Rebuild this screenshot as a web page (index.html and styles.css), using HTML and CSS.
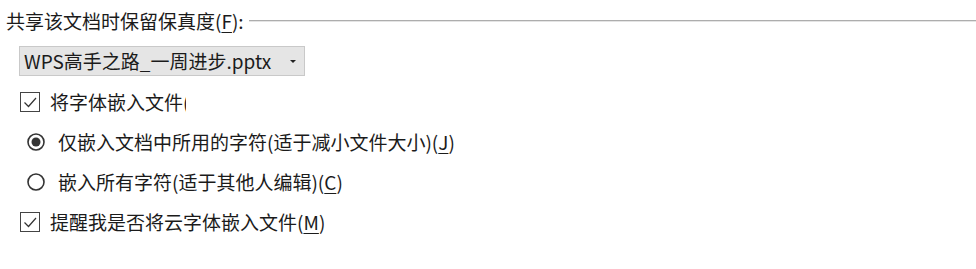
FILE: index.html
```html
<!DOCTYPE html>
<html lang="zh-CN">
<head>
  <meta charset="UTF-8">
  <title>保留保真度</title>
  <link rel="stylesheet" href="styles.css">
</head>
<body>

<div class="fidelity-panel">
  <!-- Group title -->
  <div class="group-title">
    <span>共享该文档时保留保真度(<u>F</u>):</span>
    <div class="rule"></div>
  </div>

  <!-- Document select -->
  <div class="doc-select">
    <span class="doc-name">WPS高手之路_一周进步.pptx</span>
    <span class="arrow"></span>
  </div>

  <!-- Options -->
  <div class="option-list">
    <div class="option check-row">
      <svg class="checkbox" width="20" height="20" viewBox="0 0 20 20">
        <rect x="0.5" y="0.5" width="19" height="19" fill="#fff" stroke="#444"/>
        <path d="M4.5 10.5 L8.5 14.5 L16 6" fill="none" stroke="#333" stroke-width="1.2"/>
      </svg>
      <span class="label clipped">将字体嵌入文件(</span>
    </div>

    <div class="option radio-row">
      <svg class="radio" width="18" height="18" viewBox="0 0 18 18">
        <circle cx="9" cy="9" r="8" fill="#fff" stroke="#333" stroke-width="1.6"/>
        <circle cx="9" cy="9" r="4.5" fill="#333"/>
      </svg>
      <span class="label">仅嵌入文档中所用的字符(适于减小文件大小)(<u>J</u>)</span>
    </div>

    <div class="option radio-row">
      <svg class="radio" width="18" height="18" viewBox="0 0 18 18">
        <circle cx="9" cy="9" r="8" fill="#fff" stroke="#333" stroke-width="1.6"/>
      </svg>
      <span class="label">嵌入所有字符(适于其他人编辑)(<u>C</u>)</span>
    </div>

    <div class="option check-row">
      <svg class="checkbox" width="20" height="20" viewBox="0 0 20 20">
        <rect x="0.5" y="0.5" width="19" height="19" fill="#fff" stroke="#444"/>
        <path d="M4.5 10.5 L8.5 14.5 L16 6" fill="none" stroke="#333" stroke-width="1.2"/>
      </svg>
      <span class="label">提醒我是否将云字体嵌入文件(<u>M</u>)</span>
    </div>
  </div>
</div>

</body>
</html>
```

FILE: styles.css
```css
/* Fidelity panel */
body {
  margin: 0;
  background-color: #fff;
  color: #1b1b1b;
  font-family: "Noto Sans CJK SC", "Noto Sans", sans-serif;
  font-size: 19px;
}
.fidelity-panel {
  padding: 9px 0 0 6px;
}
.group-title {
  display: flex;
  align-items: center;
  height: 24px;
  line-height: 24px;
}
.group-title .rule {
  flex: 1;
  height: 0;
  margin-left: 5px;
  margin-top: -1px;
  border-top: 1px solid #adadad;
  border-bottom: 1px solid #e4e4e4;
}
u {
  text-decoration-thickness: 1px;
  text-underline-offset: 3px;
}
.doc-select {
  display: flex;
  align-items: center;
  justify-content: space-between;
  width: 286px;
  height: 30px;
  margin: 13px 0 0 13px;
  padding: 0 8px 0 4px;
  box-sizing: border-box;
  background-color: #e5e5e5;
  border: 1px solid #c9c9c9;
}
.doc-name {
  line-height: 28px;
}
.arrow {
  width: 0;
  height: 0;
  border-left: 3px solid transparent;
  border-right: 3px solid transparent;
  border-top: 3px solid #222;
}
.option-list {
  margin-top: 6px;
}
.option {
  display: flex;
  align-items: center;
  height: 40px;
}
.check-row {
  padding-left: 14px;
}
.check-row .checkbox {
  margin-right: 10px;
}
.radio-row {
  padding-left: 21px;
}
.radio-row .radio {
  margin-right: 13px;
}
.label {
  white-space: nowrap;
  line-height: 26px;
}
.label.clipped {
  display: inline-block;
  width: 136px;
  overflow: hidden;
}
```
